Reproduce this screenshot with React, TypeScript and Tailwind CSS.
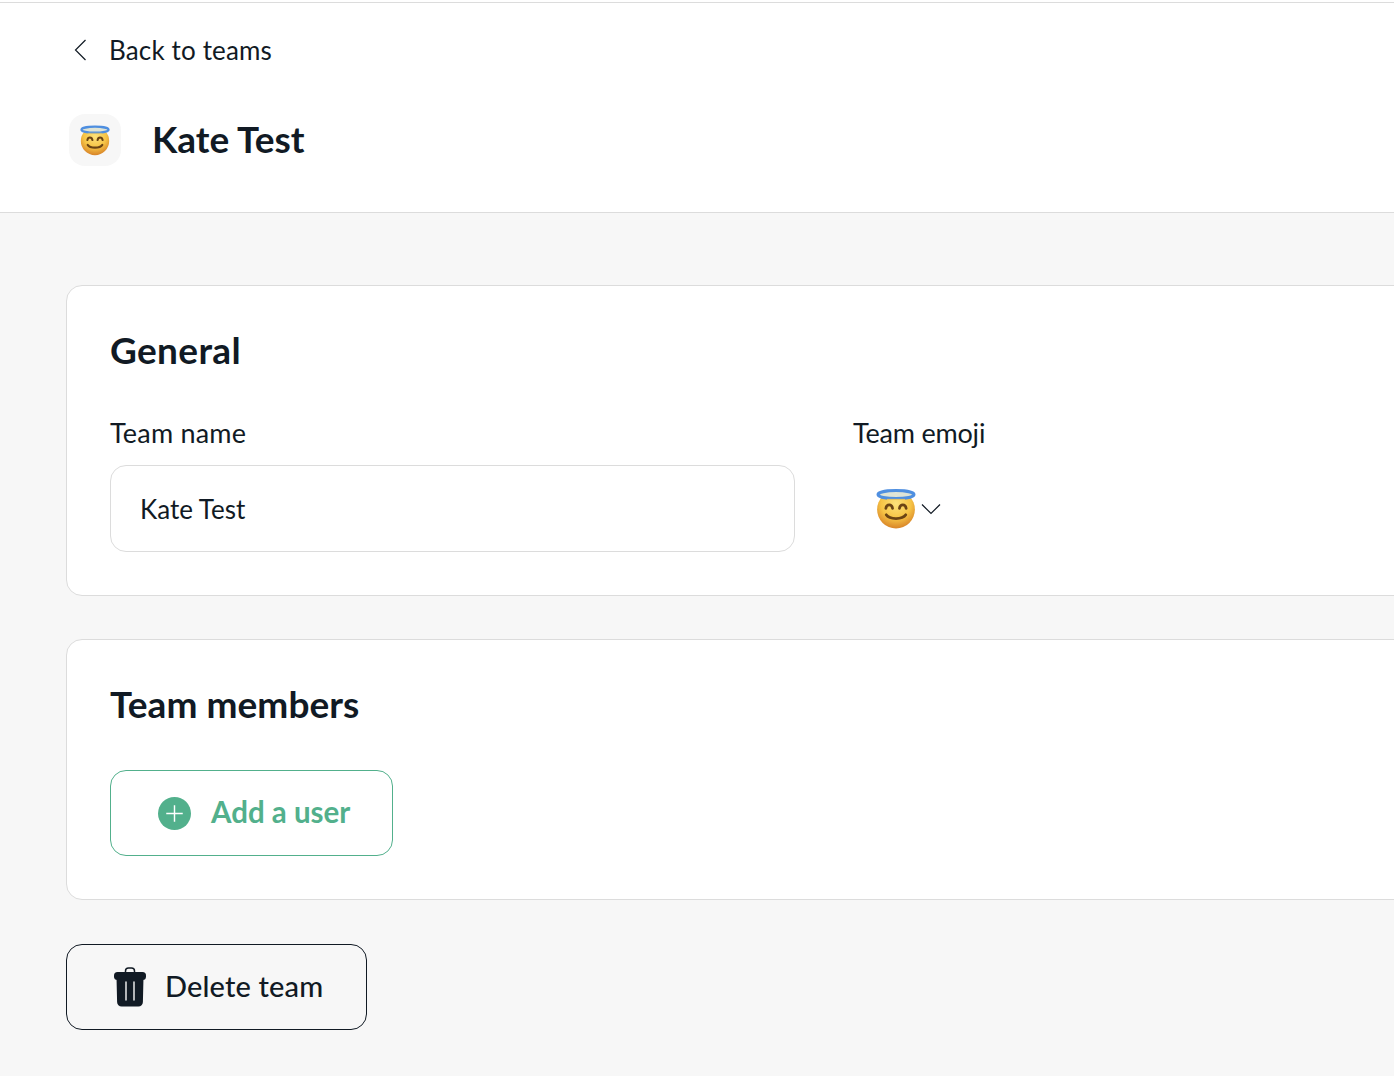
function HaloEmoji({ className, id }: { className?: string; id: string }) {
	return (
		<svg viewBox="0 0 40 40" className={className} aria-hidden="true">
			<defs>
				<radialGradient id={id} cx="50%" cy="34%" r="68%">
					<stop offset="0%" stopColor="#fde27a" />
					<stop offset="58%" stopColor="#f6c445" />
					<stop offset="100%" stopColor="#d67f26" />
				</radialGradient>
			</defs>
			<circle cx="20" cy="20.6" r="18.9" fill={`url(#${id})`} />
			<ellipse cx="20" cy="5.6" rx="18" ry="4" fill="#dfe4d6" stroke="#4f8fe0" strokeWidth="3" />
			<path d="M11 10.4h18" stroke="#f3c95a" strokeWidth="1" />
			<path d="M9.8 19.4c.8-4.6 6-4.6 6.8 0" fill="none" stroke="#6b4414" strokeWidth="2.7" strokeLinecap="round" />
			<path d="M23.4 19.4c.8-4.6 6-4.6 6.8 0" fill="none" stroke="#6b4414" strokeWidth="2.7" strokeLinecap="round" />
			<path d="M10.2 25.8c3.4 5 16.2 5 19.6 0" fill="none" stroke="#6b4414" strokeWidth="2.8" strokeLinecap="round" />
		</svg>
	);
}

function TrashIcon() {
	return (
		<svg viewBox="0 0 34 40" className="h-[40px] w-[34px]" aria-hidden="true">
			<path d="M12.5 6V4a3 3 0 0 1 3-3h3a3 3 0 0 1 3 3v2" fill="none" stroke="#111a24" strokeWidth="1.5" />
			<rect x="1" y="5" width="32" height="8" rx="3.5" fill="#111a24" />
			<path d="M3.5 10h27l-.6 25a4.5 4.5 0 0 1-4.5 4.5H8.6a4.5 4.5 0 0 1-4.5-4.5z" fill="#111a24" />
			<path d="M13 15v18M21 15v18" stroke="#f7f7f7" strokeWidth="1.4" strokeLinecap="round" />
		</svg>
	);
}

export default function App() {
	return (
		<div className="h-[1076px] w-[1394px] overflow-hidden bg-[#f7f7f7] font-['Lato',sans-serif] text-[#111a24]">
			{/* Header */}
			<header className="h-[213px] border-b border-[#dcdcdc] bg-white pt-[2px]">
				<div className="h-px bg-[#dcdcdc]" />
				<div className="mt-[24px] flex h-[47px] items-center pl-[74px]">
					<svg viewBox="0 0 13 22" className="mb-[2px] h-[22px] w-[13px]" fill="none" aria-hidden="true">
						<path d="M11.5 1 1.5 11l10 10" stroke="#111a24" strokeWidth="1.2" />
					</svg>
					<span className="ml-[22px] pb-[1px] text-[26px] tracking-[0.15px]">Back to teams</span>
				</div>
				<div className="mt-[39px] flex items-center pl-[69px]">
					<div className="flex h-[52px] w-[52px] items-center justify-center rounded-[16px] bg-[#f7f7f7]">
						<HaloEmoji id="face-small" className="h-[31px] w-[30px]" />
					</div>
					<h1 className="ml-[31px] pb-[2px] text-[37px] font-bold leading-[52px]">Kate Test</h1>
				</div>
			</header>

			<main className="pl-[66px] pt-[72px]">
				{/* General */}
				<section className="mr-[-24px] h-[311px] rounded-[16px] border border-[#dcdcdc] bg-white pl-[43px] pt-[41px]">
					<h2 className="text-[37px] font-bold leading-[46px] tracking-[0.35px]">General</h2>
					<div className="mt-[42px] flex">
						<div className="w-[685px]">
							<label className="block text-[27px] leading-[36px] tracking-[0.2px]">Team name</label>
							<div className="mt-[14px] flex h-[87px] items-center rounded-[16px] border border-[#dcdcdc] pl-[29px] pt-[2px] text-[26px]">
								Kate Test
							</div>
						</div>
						<div className="ml-[58px]">
							<label className="block text-[27px] leading-[36px] tracking-[-0.2px]">Team emoji</label>
							<div className="ml-[23px] mt-[38px] flex items-center">
								<HaloEmoji id="face-large" className="h-[40px] w-[40px]" />
								<svg viewBox="0 0 20 12" className="mb-[1px] ml-[5px] h-[12px] w-[20px]" fill="none" aria-hidden="true">
									<path d="M1 1.5 10 10.5 19 1.5" stroke="#111a24" strokeWidth="1.2" />
								</svg>
							</div>
						</div>
					</div>
				</section>

				{/* Team members */}
				<section className="mr-[-24px] mt-[43px] h-[261px] rounded-[16px] border border-[#dcdcdc] bg-white pl-[43px] pt-[41px]">
					<h2 className="text-[37px] font-bold leading-[46px] tracking-[0.05px]">Team members</h2>
					<button
						type="button"
						className="mt-[43px] flex h-[86px] w-[283px] items-center rounded-[16px] border border-[#52b08c] pl-[47px] text-[#52b08c]"
					>
						<svg viewBox="0 0 32 32" className="h-[33px] w-[33px]" aria-hidden="true">
							<circle cx="16" cy="16" r="16" fill="#52b08c" />
							<path d="M16 8v16M8 16h16" stroke="#fff" strokeWidth="1.4" />
						</svg>
						<span className="ml-[20px] pb-[1px] text-[29.5px] font-bold">Add a user</span>
					</button>
				</section>

				{/* Delete */}
				<button
					type="button"
					className="mt-[44px] flex h-[86px] w-[301px] items-center rounded-[16px] border border-[#111a24] pl-[46px]"
				>
					<TrashIcon />
					<span className="ml-[18px] pb-[3px] text-[29px] font-medium tracking-[0.15px]">Delete team</span>
				</button>
			</main>
		</div>
	);
}
